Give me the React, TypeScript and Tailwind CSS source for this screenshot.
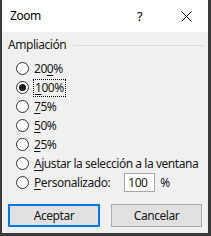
import React from 'react'

const font = { fontFamily: '"Noto Sans", "Open Sans", sans-serif' }

function Radio({ checked }: { checked?: boolean }) {
  return (
    <span className="w-[13px] h-[13px] rounded-full border border-[#333333] bg-white flex items-center justify-center shrink-0">
      {checked && <span className="w-[7px] h-[7px] rounded-full bg-[#1a1a1a]" />}
    </span>
  )
}

function Row({ children, checked }: { children: React.ReactNode; checked?: boolean }) {
  return (
    <div className="h-[19px] flex items-center pl-[8px] whitespace-nowrap">
      <Radio checked={checked} />
      <div className="ml-[5px] flex items-center">{children}</div>
    </div>
  )
}

export default function App() {
  return (
    <div
      className="w-[211px] h-[236px] bg-[#f0f0f0] border-l-2 border-r-[3px] border-b-[3px] border-[#3a3a3a] flex flex-col text-[12px] text-[#1a1a1a] leading-none tracking-[-0.45px] whitespace-nowrap"
      style={font}
    >
      <div className="h-[32px] bg-white flex items-center shrink-0 relative">
        <span className="pl-[8px] text-[12px] text-black">Zoom</span>
        <span className="absolute left-[135px] top-[10px] text-[13px] text-black">?</span>
        <svg className="absolute left-[179px] top-[11px]" width="11" height="11" viewBox="0 0 11 11">
          <path d="M0.5 0.5 L10.5 10.5 M10.5 0.5 L0.5 10.5" stroke="#111" strokeWidth="1" fill="none" />
        </svg>
      </div>

      <div className="flex flex-col pl-[6px] pr-[3px]">
        <div className="h-[14px] mt-[6px] flex items-center">
          <span>Ampliación</span>
          <span className="flex-1 h-px bg-[#dcdcdc] ml-[7px]" />
        </div>

        <div className="mt-[7px] flex flex-col">
          <Row>
            <span>20<u className="underline-offset-2">0</u>%</span>
          </Row>
          <Row checked>
            <span className="border border-dotted border-black px-[1px] py-[2px] -ml-[1px]">
              <u className="underline-offset-2">1</u>00%
            </span>
          </Row>
          <Row>
            <span><u className="underline-offset-2">7</u>5%</span>
          </Row>
          <Row>
            <span><u className="underline-offset-2">5</u>0%</span>
          </Row>
          <Row>
            <span><u className="underline-offset-2">2</u>5%</span>
          </Row>
          <Row>
            <span><u className="underline-offset-2">A</u>justar la selección a la ventana</span>
          </Row>
          <Row>
            <span><u className="underline-offset-2">P</u>ersonalizado:</span>
            <div className="ml-[14px] w-[31px] h-[19px] bg-white border border-[#a8a8a8] flex items-center pl-[3px]">
              100
            </div>
            <span className="ml-[5px]">%</span>
          </Row>
        </div>

        <div className="mt-[12px] flex gap-[11px]">
          <button className="w-[92px] h-[23px] bg-[#e1e1e1] border-2 border-[#0078d7] flex items-center justify-center text-[12px]">
            Aceptar
          </button>
          <button className="w-[91px] h-[23px] bg-[#e1e1e1] border border-[#adadad] flex items-center justify-center text-[12px]">
            Cancelar
          </button>
        </div>
      </div>
    </div>
  )
}
